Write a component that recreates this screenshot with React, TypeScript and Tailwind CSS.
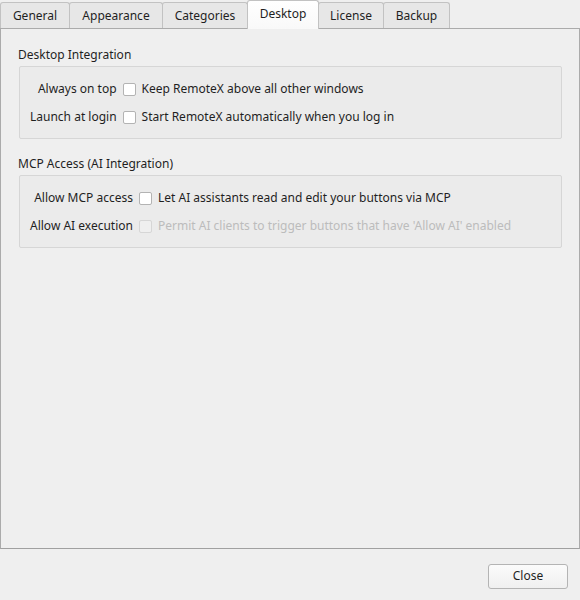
import React from "react";

const tabs = [
  { name: "General", w: "w-[70px]" },
  { name: "Appearance", w: "w-[94px]" },
  { name: "Categories", w: "w-[86px]" },
  { name: "Desktop", w: "w-[72px]" },
  { name: "License", w: "w-[66px]" },
  { name: "Backup", w: "w-[67px]" },
];

function Checkbox({ disabled }: { disabled?: boolean }) {
  return (
    <span
      className={
        "inline-block w-[13px] h-[13px] rounded-[2px] border shrink-0 " +
        (disabled ? "bg-[#efefef] border-[#d6d6d6]" : "bg-white border-[#b3b3b3]")
      }
    />
  );
}

function Row({ label, text, disabled }: { label: string; text: string; disabled?: boolean }) {
  return (
    <>
      <div className="h-[28px] flex items-center justify-end whitespace-nowrap">{label}</div>
      <div className="h-[28px] flex items-center gap-[6px] whitespace-nowrap">
        <Checkbox disabled={disabled} />
        <span className={disabled ? "text-[#bcbcbc]" : ""}>{text}</span>
      </div>
    </>
  );
}

export default function App() {
  return (
    <div
      className="w-[580px] h-[600px] bg-[#efefef] flex flex-col text-[12px] text-[#1f1f1f] overflow-hidden"
      style={{ fontFamily: '"Noto Sans", "Open Sans", sans-serif' }}
    >
      <div className="flex items-end h-[28px] relative z-10">
        {tabs.map((t, i) => {
          const sel = t.name === "Desktop";
          return (
            <div
              key={t.name}
              className={
                t.w +
                " flex items-center justify-center border border-[#c2c2c2] rounded-t-[3px] " +
                (i > 0 ? "-ml-px " : "") +
                (sel
                  ? "h-[29px] bg-gradient-to-b from-white to-[#f9f9f9] border-b-0 border-[#bdbdbd] relative z-10 -mb-px pb-[2px]"
                  : "h-[26px] bg-[#e7e7e7] border-b-0 pt-[1px]")
              }
            >
              {t.name}
            </div>
          );
        })}
      </div>
      <div className="h-[521px] border border-[#ababab] border-b-[#a0a0a0] bg-[#efefef] px-[17px] pt-[17px] flex flex-col">
        <div className="h-[18px] leading-[18px]">Desktop Integration</div>
        <div className="mt-[2px] ml-[1px] border border-[#d6d6d6] rounded-[2px] bg-[#ebebeb] pt-[8px] pb-[7px] pl-[10px] grid grid-cols-[auto_1fr] gap-x-[6px]">
          <Row label="Always on top" text="Keep RemoteX above all other windows" />
          <Row label="Launch at login" text="Start RemoteX automatically when you log in" />
        </div>
        <div className="h-[18px] leading-[18px] mt-[16px]">MCP Access (AI Integration)</div>
        <div className="mt-[2px] ml-[1px] border border-[#d6d6d6] rounded-[2px] bg-[#ebebeb] pt-[8px] pb-[7px] pl-[10px] grid grid-cols-[auto_1fr] gap-x-[6px]">
          <Row label="Allow MCP access" text="Let AI assistants read and edit your buttons via MCP" />
          <Row
            label="Allow AI execution"
            text="Permit AI clients to trigger buttons that have 'Allow AI' enabled"
            disabled
          />
        </div>
      </div>
      <div className="flex justify-end pt-[15px] pr-[12px]">
        <button className="w-[80px] h-[25px] border border-[#b4b4b4] rounded-[3px] bg-gradient-to-b from-[#fbfbfb] to-[#f0f0f0] flex items-center justify-center pb-[1px]">
          Close
        </button>
      </div>
    </div>
  );
}
